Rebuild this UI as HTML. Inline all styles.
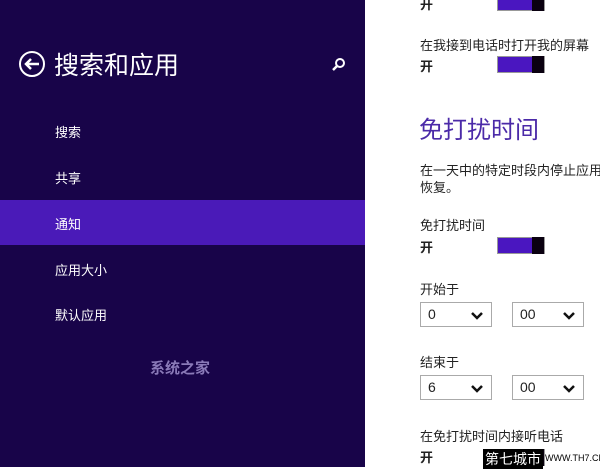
<!DOCTYPE html><html><head><meta charset="utf-8"><style>
body{margin:0;width:600px;height:467px;overflow:hidden;background:#fff;font-family:"Liberation Sans","Noto Sans CJK SC",sans-serif;position:relative}
.l{position:absolute;left:0;top:0;width:365px;height:467px;background:#180449}
.sel{position:absolute;left:0;top:200px;width:365px;height:45px;background:#4a1ab8}
.t{position:absolute;white-space:nowrap}
.w{color:#fff;font-size:13px}
.k{color:#222;font-size:13px}
.tg{position:absolute;left:497px;width:46px;height:15px;border:1px solid #999;background:#4a16c0}
.tg:after{content:"";position:absolute;right:0;top:-1px;width:12px;height:17px;background:#0a0010}
.s{position:absolute;width:72px;height:25px;border:1px solid #aaa;box-sizing:border-box;font-size:14px;color:#222;line-height:23px;padding-left:7px}
.s svg{position:absolute;right:8px;top:9px}
</style></head><body>
<div class="l"></div><div class="sel"></div>
<svg style="position:absolute;left:18px;top:50px" width="28" height="28" viewBox="0 0 28 28"><circle cx="14" cy="14" r="12" fill="none" stroke="#fff" stroke-width="2"/><path d="M8 14H21M13 9L8 14L13 19" fill="none" stroke="#fff" stroke-width="2.5"/></svg>
<div class="t" style="left:54px;top:46px;color:#fff;font-size:25px">搜索和应用</div>
<svg style="position:absolute;left:331px;top:57px" width="15" height="15" viewBox="0 0 15 15"><circle cx="9" cy="6" r="4" fill="none" stroke="#fff" stroke-width="2"/><path d="M6 9L2 13" stroke="#fff" stroke-width="2.5"/></svg>
<div class="t w" style="left:55px;top:122px">搜索</div>
<div class="t w" style="left:55px;top:168px">共享</div>
<div class="t w" style="left:55px;top:214px">通知</div>
<div class="t w" style="left:55px;top:260px">应用大小</div>
<div class="t w" style="left:55px;top:305px">默认应用</div>
<div class="t" style="left:150px;top:357px;color:#8a7ab8;font-size:15px;font-weight:bold">系统之家</div>

<div class="t k" style="left:420px;top:-6px;font-weight:bold">开</div>
<div class="tg" style="top:-6px"></div>
<div class="t k" style="left:420px;top:35px">在我接到电话时打开我的屏幕</div>
<div class="t k" style="left:420px;top:56px;font-weight:bold">开</div>
<div class="tg" style="top:56px"></div>
<div class="t" style="left:419px;top:110px;color:#4b2aa8;font-size:24px">免打扰时间</div>
<div class="t k" style="left:420px;top:160px">在一天中的特定时段内停止应用</div>
<div class="t k" style="left:420px;top:177px">恢复。</div>
<div class="t k" style="left:420px;top:215px">免打扰时间</div>
<div class="t k" style="left:420px;top:237px;font-weight:bold">开</div>
<div class="tg" style="top:237px"></div>
<div class="t k" style="left:420px;top:279px">开始于</div>
<div class="s" style="left:420px;top:302px">0<svg width="12" height="8"><path d="M1 1L6 6L11 1" fill="none" stroke="#111" stroke-width="2.5"/></svg></div>
<div class="s" style="left:512px;top:302px">00<svg width="12" height="8"><path d="M1 1L6 6L11 1" fill="none" stroke="#111" stroke-width="2.5"/></svg></div>
<div class="t k" style="left:420px;top:352px">结束于</div>
<div class="s" style="left:420px;top:375px">6<svg width="12" height="8"><path d="M1 1L6 6L11 1" fill="none" stroke="#111" stroke-width="2.5"/></svg></div>
<div class="s" style="left:512px;top:375px">00<svg width="12" height="8"><path d="M1 1L6 6L11 1" fill="none" stroke="#111" stroke-width="2.5"/></svg></div>
<div class="t k" style="left:420px;top:426px">在免打扰时间内接听电话</div>
<div class="t k" style="left:420px;top:447px;font-weight:bold">开</div>
<div class="tg" style="top:449px"></div>
<div class="t" style="left:483px;top:449px;font-size:14px;color:#fff;background:#000;padding:0 2px">第七城市</div>
<div class="t" style="left:545px;top:453px;font-size:9px;color:#000">WWW.TH7.CN</div>
</body></html>
